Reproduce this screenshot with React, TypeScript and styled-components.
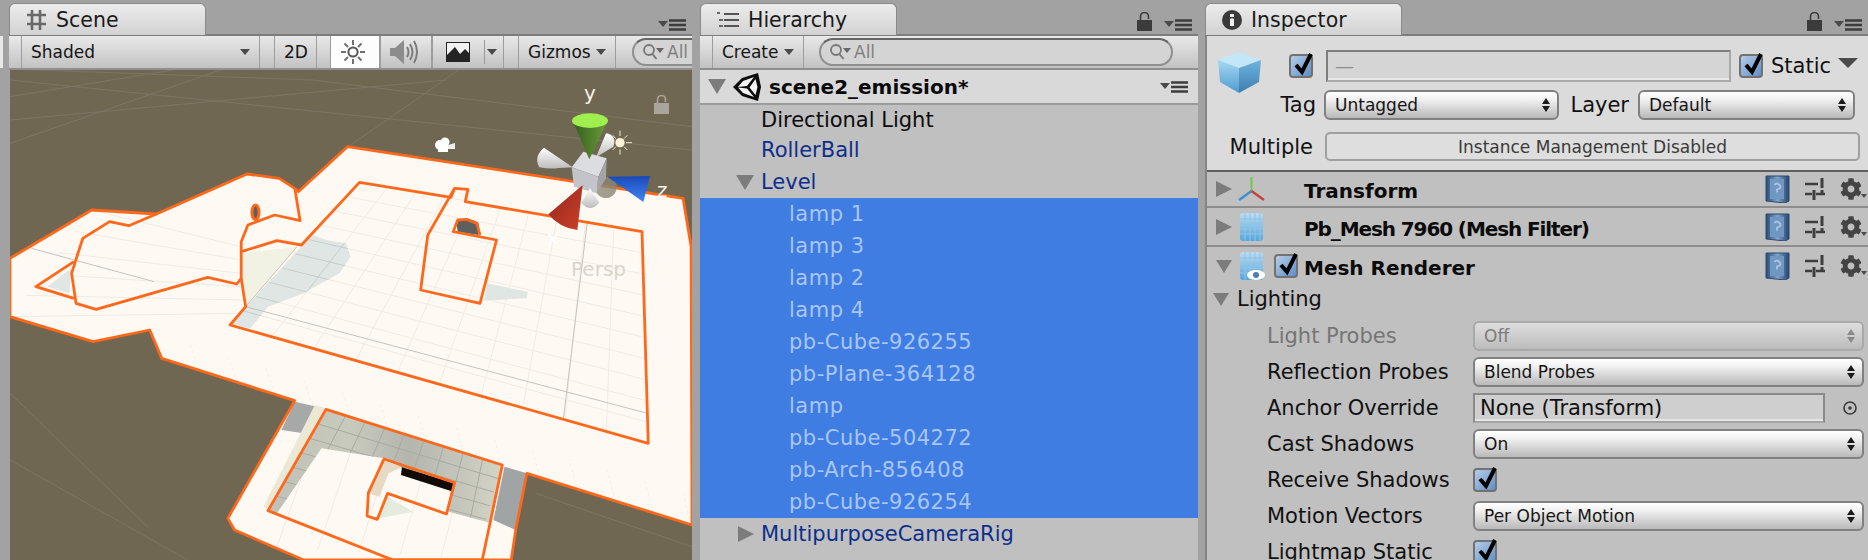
import styled, { createGlobalStyle } from 'styled-components';
import { FaCog } from 'react-icons/fa';

const GlobalStyle = createGlobalStyle`
  html, body { margin: 0; padding: 0; background: #a2a2a2; }
  * { box-sizing: border-box; }
`;

const Root = styled.div`
  width: 1868px;
  height: 560px;
  display: flex;
  overflow: hidden;
  background: #a2a2a2;
  font-family: "DejaVu Sans", sans-serif;
  color: #111;
`;

const Gutter = styled.div`
  width: 9px;
  padding-top: 36px;
  display: flex;
  flex-direction: column;
`;

const GutterBar = styled.div`
  width: 3px;
  height: 32px;
  background: #e8e8e8;
`;

const Panel = styled.section<{ $width: number; $gap?: number }>`
  width: ${p => p.$width}px;
  margin-left: ${p => p.$gap || 0}px;
  height: 100%;
  display: flex;
  flex-direction: column;
  flex-shrink: 0;
`;

const TabStrip = styled.div`
  height: 36px;
  padding-top: 3px;
  display: flex;
  align-items: stretch;
  justify-content: space-between;
  border-bottom: 2px solid #7d7d7d;
  flex-shrink: 0;
`;

const Tab = styled.div`
  width: 197px;
  height: 32px;
  padding-left: 16px;
  display: flex;
  align-items: center;
  gap: 9px;
  border: 1px solid #8a8a8a;
  border-bottom: none;
  border-radius: 6px 6px 0 0;
  background: linear-gradient(#ececec, #d2d2d2);
  font-size: 20.5px;
  color: #1a1a1a;
`;

const TabActions = styled.div`
  display: flex;
  align-items: flex-end;
  gap: 12px;
  padding: 0 6px 3px 0;
`;

const Toolbar = styled.div`
  height: 34px;
  display: flex;
  align-items: stretch;
  padding-left: 12px;
  background: linear-gradient(#e9e9e9, #c2c2c2);
  border-bottom: 2px solid #8f8f8f;
  flex-shrink: 0;
  overflow: hidden;
`;

const ToolButton = styled.div<{ $width: number; $gap?: number; $active?: boolean; $tight?: boolean }>`
  width: ${p => p.$width}px;
  margin-left: ${p => p.$gap || 0}px;
  padding: ${p => (p.$tight ? '0 6px 0 13px' : '0 9px')};
  display: flex;
  align-items: center;
  justify-content: space-between;
  flex-shrink: 0;
  font-size: 17px;
  color: #151515;
  background: ${p => (p.$active ? '#fdfdfd' : 'transparent')};
  border-left: 1px solid #9d9d9d;
  border-right: 1px solid #9d9d9d;
`;

const ToolDivider = styled.span`
  width: 1px;
  height: 24px;
  margin-left: 12px;
  background: #9a9a9a;
`;

const SearchField = styled.div<{ $width: number; $gap: number }>`
  width: ${p => p.$width}px;
  height: 28px;
  margin: 2px 0 0 ${p => p.$gap}px;
  padding-left: 8px;
  display: flex;
  align-items: center;
  gap: 1px;
  flex-shrink: 0;
  border: 2px solid #8e8e8e;
  border-top-color: #666;
  border-radius: 14px;
  background: #d4d4d4;
  font-size: 17px;
  color: #808080;
`;

const SceneView = styled.div`
  position: relative;
  margin-left: 1px;
  flex: 1;
  background: #706753;
  overflow: hidden;

  > svg.floor {
    display: block;
    width: 100%;
    height: 100%;
  }
`;

const OverlayText = styled.span<{ $left: number; $top: number; $color: string }>`
  position: absolute;
  left: ${p => p.$left}px;
  top: ${p => p.$top}px;
  font-size: 20px;
  line-height: 24px;
  color: ${p => p.$color};
`;

const OverlayIcon = styled.div<{ $left: number; $top: number }>`
  position: absolute;
  left: ${p => p.$left}px;
  top: ${p => p.$top}px;
  display: flex;
`;

const HierarchyBody = styled.div`
  flex: 1;
  background: #c0c0c0;
`;

const SceneRow = styled.div`
  height: 35px;
  padding: 0 10px 0 8px;
  display: flex;
  align-items: center;
  background: #d9d9d9;
  border-bottom: 2px solid #9b9b9b;
  font-size: 20px;
  font-weight: 700;
  color: #0a0a0a;
`;

const SceneName = styled.span`
  margin-left: 8px;
  flex: 1;
`;

const TreeRow = styled.div<{ $indent: number; $selected?: boolean; $tone?: 'plain' | 'prefab'; $height?: number }>`
  height: ${p => p.$height || 32}px;
  padding-left: ${p => p.$indent}px;
  display: flex;
  align-items: center;
  font-size: 21px;
  letter-spacing: ${p => (p.$selected ? '0.5px' : '0')};
  background: ${p => (p.$selected ? '#3f7de2' : 'transparent')};
  color: ${p => (p.$selected ? '#a9c6f6' : p.$tone === 'prefab' ? '#0e2f8c' : '#0c0c0c')};
`;

const Arrow = styled.i<{ $open?: boolean; $size: number; $margin?: number; $color?: string }>`
  width: 0;
  height: 0;
  flex-shrink: 0;
  margin-right: ${p => p.$margin || 0}px;
  border-style: solid;
  border-color: transparent;
  ${p =>
    p.$open
      ? `border-width: ${p.$size * 1.7}px ${p.$size}px 0; border-top-color: ${p.$color || '#7c7c7c'};`
      : `border-width: ${p.$size}px 0 ${p.$size}px ${p.$size * 2}px; border-left-color: ${p.$color || '#7c7c7c'};`}
`;

const StaticArrow = styled(Arrow)`
  margin-left: auto;
  margin-top: -6px;
  border-width: 10px 10px 0;
`;

const InspectorBody = styled.div`
  flex: 1;
  background: #c0c0c0;
  border-left: 2px solid #848484;
  overflow: hidden;
`;

const InspectorHead = styled.div`
  height: 136px;
  padding-top: 14px;
  background: #dbdbdb;
  border-bottom: 2px solid #5f5f5f;
  display: flex;
  flex-direction: column;
`;

const HeadRow = styled.div<{ $top?: number; $height: number }>`
  height: ${p => p.$height}px;
  margin-top: ${p => p.$top || 0}px;
  display: flex;
  align-items: center;
  font-size: 21px;
`;

const CubeSlot = styled.div`
  width: 43px;
  height: 32px;
  margin: 0 28px 0 11px;
  padding-top: 2px;
  overflow: visible;
  flex-shrink: 0;
`;

const NameInput = styled.div`
  width: 405px;
  height: 32px;
  margin: 0 8px 0 13px;
  padding-left: 7px;
  display: flex;
  align-items: center;
  background: #d5d5d5;
  border: 2px solid #7f7f7f;
  border-bottom-color: #a9a9a9;
  border-right-color: #a9a9a9;
  box-shadow: inset 0 -2px 0 #e9e9e9;
  color: #8d8d8d;
  font-size: 19px;
`;

const StaticLabel = styled.span`
  margin-left: 8px;
`;

const HeadLabel = styled.span<{ $width: number; $gap?: number }>`
  width: ${p => p.$width}px;
  margin-left: ${p => p.$gap || 0}px;
  flex-shrink: 0;
  text-align: right;
`;

const Select = styled.div<{ $width?: number; $gap?: number; $disabled?: boolean }>`
  width: ${p => (p.$width ? `${p.$width}px` : '100%')};
  height: 30px;
  margin-left: ${p => p.$gap || 0}px;
  padding: 0 7px 0 9px;
  display: flex;
  align-items: center;
  justify-content: space-between;
  flex-shrink: 0;
  font-size: 17px;
  border: 2px solid ${p => (p.$disabled ? '#a9a9a9' : '#808080')};
  border-radius: 6px;
  background: ${p => (p.$disabled ? 'linear-gradient(#dedede, #bcbcbc)' : 'linear-gradient(#ffffff, #f0f0f0 30%, #b9b9b9)')};
  color: ${p => (p.$disabled ? '#7b7b7b' : '#151515')};
`;

const Stepper = styled.span<{ $muted?: boolean }>`
  display: flex;
  flex-direction: column;
  gap: 2px;

  &::before, &::after {
    content: '';
    width: 0;
    height: 0;
    border-left: 4px solid transparent;
    border-right: 4px solid transparent;
  }
  &::before { border-bottom: 6px solid ${p => (p.$muted ? '#8a8a8a' : '#1a1a1a')}; }
  &::after { border-top: 6px solid ${p => (p.$muted ? '#8a8a8a' : '#1a1a1a')}; }
`;

const WideButton = styled.div`
  width: 535px;
  height: 29px;
  margin-left: 12px;
  display: flex;
  align-items: center;
  justify-content: center;
  border: 2px solid #a0a0a0;
  border-radius: 5px;
  background: #dedede;
  font-size: 17px;
  color: #3a3a3a;
`;

const ComponentRow = styled.div<{ $height: number; $border?: boolean }>`
  height: ${p => p.$height}px;
  padding: 0 1px 0 9px;
  display: flex;
  align-items: center;
  border-bottom: ${p => (p.$border ? '2px solid #8d8d8d' : 'none')};
`;

const IconSlot = styled.div`
  width: 27px;
  margin-left: 6px;
  display: flex;
  justify-content: center;
  flex-shrink: 0;
`;

const CheckSlot = styled.div`
  width: 39px;
  padding-left: 9px;
  flex-shrink: 0;
  display: flex;
`;

const ComponentTitle = styled.span<{ $tracking?: number }>`
  flex: 1;
  margin-top: 4px;
  font-size: 20px;
  font-weight: 700;
  letter-spacing: ${p => p.$tracking || 0}px;
  color: #0b0b0b;
`;

const ComponentTools = styled.div`
  display: flex;
  align-items: center;
  gap: 15px;
`;

const SectionRow = styled.div`
  height: 33px;
  padding: 0 0 5px 6px;
  display: flex;
  align-items: center;
  font-size: 21px;
`;

const PropRow = styled.div<{ $muted?: boolean }>`
  height: 36px;
  padding: 0 4px 0 60px;
  display: grid;
  grid-template-columns: 206px 1fr;
  align-items: center;
  font-size: 21px;
  color: ${p => (p.$muted ? '#757575' : '#111')};
`;

const ObjectField = styled.div`
  display: flex;
  align-items: center;
  justify-content: space-between;
  padding-right: 6px;
`;

const ObjectValue = styled.div`
  width: 352px;
  height: 30px;
  padding-left: 5px;
  display: flex;
  align-items: center;
  background: #cfcfcf;
  border: 2px solid #8a8a8a;
  border-bottom-color: #a4a4a4;
  box-shadow: inset 0 -2px 0 #e4e4e4;
  font-size: 21px;
`;

const CheckBox = styled.div<{ $gap?: number; $size?: number }>`
  width: ${p => p.$size || 24}px;
  height: ${p => p.$size || 24}px;
  margin-left: ${p => p.$gap || 0}px;
  position: relative;
  flex-shrink: 0;
  border: 2px solid #727272;
  border-radius: 4px;
  background: linear-gradient(135deg, #b6cde8, #5f8fc4);

  > svg {
    position: absolute;
    left: 2px;
    top: -5px;
  }
`;

const SmallCaret = styled.i`
  width: 0;
  height: 0;
  flex-shrink: 0;
  border-left: 5px solid transparent;
  border-right: 5px solid transparent;
  border-top: 6px solid #4a4a4a;
`;

const Mark = () => (
  <svg width="22" height="26" viewBox="0 0 22 26">
    <path d="M3 14 L9 21 L18 3" fill="none" stroke="#000" strokeWidth="4" />
  </svg>
);

const Check = ({ gap, size }: { gap?: number; size?: number }) => (
  <CheckBox $gap={gap} $size={size}>
    <Mark />
  </CheckBox>
);

const MenuIcon = () => (
  <svg width="28" height="12" viewBox="0 0 28 12">
    <path d="M0 2h10l-5 6z" fill="#4a4a4a" />
    <path d="M11 1.500h17M11 6h17M11 10.500h17" stroke="#3d3d3d" strokeWidth="2.400" />
  </svg>
);

const LockIcon = ({ color = '#3b3b3b' }: { color?: string }) => (
  <svg width="15" height="19" viewBox="0 0 15 19">
    <rect x="0" y="8" width="15" height="11" fill={color} />
    <path d="M3.500 8V4.500a4 4 0 0 1 8 0V7" fill="none" stroke={color} strokeWidth="1.600" />
  </svg>
);

const GridTabIcon = () => (
  <svg width="21" height="22" viewBox="0 0 21 22">
    <path d="M6 1v20M14 1v20M1 6h19M1 15h19" stroke="#555" strokeWidth="2.600" opacity=".85" />
  </svg>
);

const ListTabIcon = () => (
  <svg width="22" height="16" viewBox="0 0 22 16">
    <path d="M0 1h3M2 8h4M2 14h4" stroke="#666" strokeWidth="2" />
    <path d="M7 2h15M7 8h15M7 14h15" stroke="#555" strokeWidth="2.200" />
  </svg>
);

const InfoIcon = () => (
  <svg width="20" height="20" viewBox="0 0 20 20">
    <circle cx="10" cy="10" r="10" fill="#3a3a3a" />
    <rect x="8" y="8.500" width="4" height="7.500" fill="#eee" />
    <rect x="8" y="4" width="4" height="3" fill="#eee" />
  </svg>
);

const SunIcon = () => (
  <svg width="26" height="26" viewBox="0 0 26 26">
    <circle cx="13" cy="13" r="4.600" fill="none" stroke="#565656" strokeWidth="2" />
    <path d="M13 1v5M13 20v5M1 13h5M20 13h5M4.500 4.500l3.500 3.500M18 18l3.500 3.500M21.500 4.500L18 8M8 18l-3.500 3.500" stroke="#707070" strokeWidth="2" />
  </svg>
);

const SpeakerIcon = () => (
  <svg width="28" height="26" viewBox="0 0 28 26">
    <path d="M0 9h5l9-8v24l-9-8H0z" fill="#8c8c8c" />
    <path d="M17 8q3 5 0 10M20 5q5 8 0 16M24 2q6 11 0 22" fill="none" stroke="#7c7c7c" strokeWidth="2" />
  </svg>
);

const ImageIcon = () => (
  <svg width="24" height="20" viewBox="0 0 24 20">
    <rect x="0" y="0" width="24" height="20" fill="#242424" />
    <path d="M1 1h22v10l-4-4-5 5-5-7-8 8z" fill="#f2f2f2" />
  </svg>
);

const SearchIcon = () => (
  <svg width="24" height="20" viewBox="0 0 24 20">
    <circle cx="7" cy="8" r="5" fill="none" stroke="#777" strokeWidth="1.800" />
    <path d="M10.500 12l4 5" stroke="#777" strokeWidth="2" />
    <path d="M14 6h8l-4 5z" fill="#666" />
  </svg>
);

const UnityLogo = () => (
  <svg width="28" height="28" viewBox="0 0 28 28">
    <path d="M0 14 L9 5 L25 0 L28 14 L25 28 L9 23z" fill="#0b0b0b" />
    <path d="M5 14 L10 8 L21 4 L14 13z" fill="#f4f4f4" />
    <path d="M5 14.500 L14 15.500 L21 24 L10 20z" fill="#f4f4f4" />
    <path d="M22.500 6 L24.500 14 L22.500 22 L16.500 14.500z" fill="#f4f4f4" />
  </svg>
);

const CubeIcon = () => (
  <svg width="43" height="41" viewBox="0 0 43 41">
    <defs>
      <linearGradient id="cubeLeft" x1="0" y1="0" x2="0" y2="1">
        <stop offset="0" stopColor="#a5d8f3" />
        <stop offset="1" stopColor="#4f9cd0" />
      </linearGradient>
      <linearGradient id="cubeRight" x1="0" y1="0" x2="0" y2="1">
        <stop offset="0" stopColor="#6fb4de" />
        <stop offset="1" stopColor="#3d7eaf" />
      </linearGradient>
    </defs>
    <path d="M21 0 L43 8 L21 16 L0 8z" fill="#c4e7f8" />
    <path d="M0 8 L21 16 L21 41 L2 30z" fill="url(#cubeLeft)" />
    <path d="M43 8 L21 16 L21 41 L41 30z" fill="url(#cubeRight)" />
  </svg>
);

const AxesIcon = () => (
  <svg width="27" height="24" viewBox="0 0 27 24">
    <path d="M13.500 14V0" stroke="#7cc24a" strokeWidth="2" />
    <path d="M13.500 14L1 23" stroke="#3f8fd0" strokeWidth="2.400" />
    <path d="M13.500 14L26 23" stroke="#c8403a" strokeWidth="2.400" />
  </svg>
);

const MeshIcon = ({ eye }: { eye?: boolean }) => (
  <svg width="26" height="28" viewBox="0 0 26 28">
    <defs>
      <linearGradient id="meshFill" x1="0" y1="0" x2="0" y2="1">
        <stop offset="0" stopColor="#bcdcf0" />
        <stop offset="1" stopColor="#55a6dd" />
      </linearGradient>
    </defs>
    <rect x="1" y="0" width="23" height="28" rx="3" fill="url(#meshFill)" />
    <path d="M6 0v28M11 0v28M16 0v28M21 0v28M1 6h23M1 11h23M1 16h23M1 21h23" stroke="#8fc3e6" strokeWidth="1" />
    {eye && (
      <g>
        <ellipse cx="17" cy="23" rx="9" ry="5" fill="#fff" />
        <circle cx="17" cy="23" r="3" fill="#4a7fb0" />
      </g>
    )}
  </svg>
);

const BookIcon = () => (
  <svg width="25" height="28" viewBox="0 0 25 28">
    <defs>
      <linearGradient id="bookFill" x1="0" y1="0" x2="1" y2="0">
        <stop offset="0" stopColor="#2a4a75" />
        <stop offset=".5" stopColor="#7ea5cc" />
        <stop offset="1" stopColor="#25436c" />
      </linearGradient>
    </defs>
    <path d="M1 1h23v25l-4 2-19-2z" fill="url(#bookFill)" stroke="#2e4a70" />
    <rect x="5" y="4" width="14" height="20" fill="#6f97c2" />
    <path d="M9.500 10q2-3 5 0t-2.500 4.500v3" fill="none" stroke="#a8c4de" strokeWidth="1.800" />
  </svg>
);

const SlidersIcon = () => (
  <svg width="20" height="22" viewBox="0 0 20 22">
    <path d="M0 6h13M0 16h7M11 16h9" stroke="#3e3e3e" strokeWidth="2.600" />
    <path d="M17 0v10" stroke="#3e3e3e" strokeWidth="3" />
    <path d="M9 12v10" stroke="#3e3e3e" strokeWidth="3" />
    <rect x="15.500" y="12" width="3" height="3" fill="#3e3e3e" />
  </svg>
);

const GearWrap = styled.div`
  display: flex;
  align-items: flex-end;
  gap: 0;
  width: 27px;

  > i {
    border-width: 4px 3px 0;
    margin-bottom: 2px;
    margin-left: -1px;
  }
`;

const GearIcon = () => (
  <GearWrap>
    <FaCog size={22} color="#444" />
    <SmallCaret />
  </GearWrap>
);

const TargetIcon = () => (
  <svg width="16" height="16" viewBox="0 0 16 16">
    <circle cx="8" cy="8" r="6" fill="none" stroke="#3a3a3a" strokeWidth="1.600" />
    <circle cx="8" cy="8" r="1.800" fill="#3a3a3a" />
  </svg>
);

const Tools = () => (
  <ComponentTools>
    <BookIcon />
    <SlidersIcon />
    <GearIcon />
  </ComponentTools>
);

// floor drawing, coordinates are in the scene's own 1528x1470 space
const ORANGE = '#ff681a';

const outer =
  '22,595 205,450 350,462 553,342 625,355 660,385 668,395 778,260 1530,415 1548,560 1550,1395 1180,1240 1155,1410 1145,1500 680,1500 525,1410 510,1375 660,1022 362,895 335,810 208,845 22,770';
const innerA =
  '805,367 1010,412 1018,385 1048,388 1042,425 1438,515 1452,1150 515,795 550,740 540,655 540,575 620,542 675,555';
const wing = '540,655 530,672 465,652 215,748 170,730 160,640 185,535 245,485 288,497 350,462';
const wingTip = '165,605 80,680 165,715';
const arch = '540,575 540,545 555,495 615,465 672,482 660,385';
const pillar = '1018,385 958,525 942,690 1075,730 1112,540 1015,515 1025,480 1045,478 1068,490 1075,525';
const pit = '730,1048 1125,1215 1080,1500 880,1500 600,1352';
const hook = '860,1197 1018,1268 1000,1362 868,1300 845,1378 822,1368 825,1298';
const floorShadow = '810,395 700,525 515,795 560,805 600,740 680,700 760,640 785,590 775,550 730,540 700,525';
const pitShadow = '730,1048 1125,1215 1100,1390 1005,1355 1020,1270 900,1225 860,1195 720,1165 620,1360 600,1352';

const lerp = (a: number[], b: number[], t: number) => [a[0] + (b[0] - a[0]) * t, a[1] + (b[1] - a[1]) * t];

const gridLines = (a: number[], b: number[], c: number[], d: number[], n: number) =>
  Array.from({ length: n + 1 }, (_, i) => {
    const p = lerp(a, b, i / n);
    const q = lerp(c, d, i / n);
    return `M${p[0]} ${p[1]}L${q[0]} ${q[1]}`;
  }).join('');

const floorGrid =
  gridLines([805, 367], [515, 795], [1438, 515], [1452, 1150], 10) +
  gridLines([805, 367], [1438, 515], [515, 795], [1452, 1150], 10) +
  gridLines([205, 450], [22, 770], [540, 560], [540, 760], 5) +
  gridLines([620, 1460], [1080, 1500], [730, 1048], [1125, 1215], 5);

const shadowGrid =
  gridLines([805, 367], [515, 795], [1438, 515], [1452, 1150], 10) +
  gridLines([805, 367], [1438, 515], [515, 795], [1452, 1150], 10);

const pitGrid =
  gridLines([730, 1048], [1125, 1215], [600, 1352], [1085, 1540], 9) +
  gridLines([730, 1048], [600, 1352], [1125, 1215], [1060, 1500], 7);

const wallGrid = gridLines([362, 895], [1548, 1395], [340, 820], [1530, 1300], 14);

const groundGrid =
  'M22 27L700 60L1550 200M22 180L1000 60M400 27L22 110M22 250L500 27M1030 27L780 260M22 60L1550 270M22 1000L330 1400M22 1200L420 1500M1200 1300L1550 1460';

const FloorDrawing = () => (
  <svg className="floor" viewBox="22 30 1528 1470" preserveAspectRatio="none">
    <defs>
      <clipPath id="floorShadowClip">
        <polygon points={floorShadow} />
      </clipPath>
      <clipPath id="pitShadowClip">
        <polygon points={pitShadow} />
      </clipPath>
      <linearGradient id="pitShade" x1="0" y1="0" x2="1" y2="0">
        <stop offset="0" stopColor="#bfc1b6" />
        <stop offset=".35" stopColor="#c9cabe" />
        <stop offset=".6" stopColor="#b4b6ae" />
        <stop offset="1" stopColor="#d3d3c6" />
      </linearGradient>
    </defs>
    <path d={groundGrid} fill="none" stroke="#7d7563" strokeWidth="1" vectorEffect="non-scaling-stroke" />
    <polygon points={outer} fill="#fff9f3" />
    <path d={floorGrid} fill="none" stroke="#f0ebe5" strokeWidth="1" vectorEffect="non-scaling-stroke" />
    <path d={wallGrid} fill="none" stroke="#f8f2de" strokeWidth="1" strokeDasharray="3 3" vectorEffect="non-scaling-stroke" />
    <polygon points={floorShadow} fill="#dfe6e3" />
    <path d={shadowGrid} clipPath="url(#floorShadowClip)" fill="none" stroke="#c5cfcc" strokeWidth="1" vectorEffect="non-scaling-stroke" />
    <polygon points="540,580 665,560 550,740 540,660" fill="#f1f2e4" />
    <polygon points="1090,670 1182,695 1180,715 1085,722" fill="#dfe6e3" />
    <polygon points="160,625 105,680 155,700" fill="#dfe6e3" />
    <polygon points="660,1025 710,1040 680,1120 630,1110" fill="#a6a9a8" />
    <polygon points="1130,1220 1180,1240 1155,1410 1105,1380" fill="#a0a4a4" />
    <polygon points="705,1035 730,1045 610,1360 590,1340" fill="#ebe8d6" />
    <polygon points={pitShadow} fill="url(#pitShade)" />
    <path d={pitGrid} clipPath="url(#pitShadowClip)" fill="none" stroke="#a9aba1" strokeWidth="1" vectorEffect="non-scaling-stroke" />
    <polygon points="855,1197 900,1222 870,1240 850,1310 825,1300" fill="#e6d9c6" />
    <polygon points="900,1222 1018,1270 1015,1295 898,1245" fill="#120a06" />
    <polygon points="868,1310 925,1355 850,1375" fill="#e6ebe0" />
    <path d="M1025 515L1022 485Q1045 465 1072 490L1072 525z" fill="#5f5f5f" />
    <ellipse cx="572" cy="457" rx="8" ry="22" fill="#5f5f5f" stroke={ORANGE} strokeWidth="3" vectorEffect="non-scaling-stroke" />
    <path d="M70 565L345 665M550 740L1450 1060M1315 490L1262 1075M665 560L550 740" fill="none" stroke="#c6c3be" strokeWidth="1" vectorEffect="non-scaling-stroke" />
    <g fill="none" stroke={ORANGE} strokeWidth="2.800" strokeLinejoin="round">
      <polygon points={outer} vectorEffect="non-scaling-stroke" />
      <polygon points={innerA} vectorEffect="non-scaling-stroke" />
      <polyline points={wing} vectorEffect="non-scaling-stroke" />
      <polyline points={wingTip} vectorEffect="non-scaling-stroke" />
      <polyline points={arch} vectorEffect="non-scaling-stroke" />
      <polyline points={pillar} vectorEffect="non-scaling-stroke" />
      <polygon points={pit} vectorEffect="non-scaling-stroke" />
      <polygon points={hook} vectorEffect="non-scaling-stroke" />
    </g>
  </svg>
);

const Gizmo = () => (
  <svg width="200" height="170" viewBox="0 0 600 510">
    <defs>
      <linearGradient id="gGreen" x1="0" x2="1" y1="0" y2="0">
        <stop offset="0" stopColor="#355f1c" />
        <stop offset="1" stopColor="#6b9c3a" />
      </linearGradient>
      <linearGradient id="gBlue" x1="0" x2="0" y1="0" y2="1">
        <stop offset="0" stopColor="#1b49b8" />
        <stop offset="1" stopColor="#3f86f5" />
      </linearGradient>
      <linearGradient id="gRed" x1="0" x2="1" y1="0" y2="1">
        <stop offset="0" stopColor="#8f2a1c" />
        <stop offset="1" stopColor="#cf3d2a" />
      </linearGradient>
      <linearGradient id="gWhite" x1="0" x2="0" y1="0" y2="1">
        <stop offset="0" stopColor="#ffffff" />
        <stop offset="1" stopColor="#bdbdbd" />
      </linearGradient>
    </defs>
    <circle cx="318" cy="322" r="32" fill="#8a8774" opacity=".8" />
    <path d="M288 232 L318 160 Q352 165 340 200z" fill="url(#gWhite)" />
    <g stroke="#efe7cf" strokeWidth="3">
      <path d="M360 152v16M360 208v16M326 188h16M378 188h18M338 166l10 10M372 200l10 10M382 166l-10 10M348 200l-10 10" />
    </g>
    <circle cx="360" cy="188" r="14" fill="#fbf1d6" />
    <path d="M218 262 L132 203 Q100 230 118 262 Q150 268 175 264z" fill="url(#gWhite)" />
    <path d="M215 262 L250 215 L320 235 L295 290z" fill="#dcdde1" />
    <path d="M215 262 L295 290 L290 340 L222 320z" fill="#c2c4c9" />
    <path d="M295 290 L320 235 L318 295 L290 340z" fill="#a4a4a6" />
    <path d="M270 325 L298 368 Q270 400 244 368z" fill="url(#gWhite)" />
    <path d="M268 238 L218 122 Q270 155 323 122z" fill="url(#gGreen)" />
    <ellipse cx="270" cy="122" rx="54" ry="22" fill="#9ff04f" />
    <path d="M322 290 L450 288 L430 366z" fill="url(#gBlue)" />
    <path d="M248 315 L145 403 Q180 445 232 450z" fill="url(#gRed)" />
  </svg>
);

const CameraIcon = () => (
  <svg width="20" height="15" viewBox="0 0 20 15">
    <circle cx="5" cy="8" r="5" fill="#fff" />
    <circle cx="10" cy="5" r="4.500" fill="#fff" />
    <rect x="3" y="8" width="10" height="7" fill="#fff" />
    <path d="M13 8l7-2v6l-7 0z" fill="#eee" />
  </svg>
);

const SELECTED = [
  'lamp 1',
  'lamp 3',
  'lamp 2',
  'lamp 4',
  'pb-Cube-926255',
  'pb-Plane-364128',
  'lamp',
  'pb-Cube-504272',
  'pb-Arch-856408',
  'pb-Cube-926254',
];

const PROPS: { label: string; value: string; muted?: boolean }[] = [
  { label: 'Light Probes', value: 'Off', muted: true },
  { label: 'Reflection Probes', value: 'Blend Probes' },
];

const App = () => {
  return (
    <>
      <GlobalStyle />
      <Root>
        <Gutter>
          <GutterBar />
        </Gutter>

        <Panel $width={683}>
          <TabStrip>
            <Tab>
              <GridTabIcon />
              Scene
            </Tab>
            <TabActions>
              <MenuIcon />
            </TabActions>
          </TabStrip>
          <Toolbar>
            <ToolButton $width={239}>
              Shaded
              <SmallCaret />
            </ToolButton>
            <ToolButton $width={43} $gap={14}>2D</ToolButton>
            <ToolButton $width={50} $gap={13} $active>
              <SunIcon />
            </ToolButton>
            <ToolButton $width={52}>
              <SpeakerIcon />
            </ToolButton>
            <ToolButton $width={72} $tight>
              <ImageIcon />
              <ToolDivider />
              <SmallCaret />
            </ToolButton>
            <ToolButton $width={98} $gap={14}>
              Gizmos
              <SmallCaret />
            </ToolButton>
            <SearchField $width={120} $gap={16}>
              <SearchIcon />
              All
            </SearchField>
          </Toolbar>
          <SceneView>
            <FloorDrawing />
            <OverlayIcon $left={490} $top={10}>
              <Gizmo />
            </OverlayIcon>
            <OverlayText $left={574} $top={11} $color="#f5f2ea">y</OverlayText>
            <OverlayText $left={647} $top={108} $color="#f8f4ee">z</OverlayText>
            <OverlayText $left={537} $top={156} $color="#ffffff">x</OverlayText>
            <OverlayText $left={561} $top={187} $color="#d9d5cd">Persp</OverlayText>
            <OverlayIcon $left={644} $top={25}>
              <LockIcon color="#a9a59c" />
            </OverlayIcon>
            <OverlayIcon $left={425} $top={67}>
              <CameraIcon />
            </OverlayIcon>
          </SceneView>
        </Panel>

        <Panel $width={498} $gap={8}>
          <TabStrip>
            <Tab>
              <ListTabIcon />
              Hierarchy
            </Tab>
            <TabActions>
              <LockIcon />
              <MenuIcon />
            </TabActions>
          </TabStrip>
          <Toolbar>
            <ToolButton $width={92} $gap={0}>
              Create
              <SmallCaret />
            </ToolButton>
            <SearchField $width={354} $gap={15}>
              <SearchIcon />
              All
            </SearchField>
          </Toolbar>
          <HierarchyBody>
            <SceneRow>
              <Arrow $open $size={9} $margin={7} />
              <UnityLogo />
              <SceneName>scene2_emission*</SceneName>
              <MenuIcon />
            </SceneRow>
            <TreeRow $indent={61} $height={29}>Directional Light</TreeRow>
            <TreeRow $indent={61} $tone="prefab">RollerBall</TreeRow>
            <TreeRow $indent={36} $tone="prefab">
              <Arrow $open $size={9} $margin={7} />
              Level
            </TreeRow>
            {SELECTED.map(name => (
              <TreeRow key={name} $indent={89} $selected>
                {name}
              </TreeRow>
            ))}
            <TreeRow $indent={38} $tone="prefab">
              <Arrow $size={8} $margin={7} />
              MultipurposeCameraRig
            </TreeRow>
          </HierarchyBody>
        </Panel>

        <Panel $width={663} $gap={7}>
          <TabStrip>
            <Tab>
              <InfoIcon />
              Inspector
            </Tab>
            <TabActions>
              <LockIcon />
              <MenuIcon />
            </TabActions>
          </TabStrip>
          <InspectorBody>
            <InspectorHead>
              <HeadRow $height={32}>
                <CubeSlot>
                  <CubeIcon />
                </CubeSlot>
                <Check />
                <NameInput>—</NameInput>
                <Check />
                <StaticLabel>Static</StaticLabel>
                <StaticArrow $open $size={10} $margin={10} $color="#4a4a4a" />
              </HeadRow>
              <HeadRow $top={8} $height={30}>
                <HeadLabel $width={109}>Tag</HeadLabel>
                <Select $width={235} $gap={8}>
                  Untagged
                  <Stepper />
                </Select>
                <HeadLabel $width={70}>Layer</HeadLabel>
                <Select $width={217} $gap={9}>
                  Default
                  <Stepper />
                </Select>
              </HeadRow>
              <HeadRow $top={12} $height={29}>
                <HeadLabel $width={106}>Multiple</HeadLabel>
                <WideButton>Instance Management Disabled</WideButton>
              </HeadRow>
            </InspectorHead>

            <ComponentRow $height={36} $border>
              <Arrow $size={8} />
              <IconSlot>
                <AxesIcon />
              </IconSlot>
              <CheckSlot />
              <ComponentTitle>Transform</ComponentTitle>
              <Tools />
            </ComponentRow>
            <ComponentRow $height={39} $border>
              <Arrow $size={8} />
              <IconSlot>
                <MeshIcon />
              </IconSlot>
              <CheckSlot />
              <ComponentTitle $tracking={-1.1}>Pb_Mesh 7960 (Mesh Filter)</ComponentTitle>
              <Tools />
            </ComponentRow>
            <ComponentRow $height={38}>
              <Arrow $open $size={8} />
              <IconSlot>
                <MeshIcon eye />
              </IconSlot>
              <CheckSlot>
                <Check />
              </CheckSlot>
              <ComponentTitle>Mesh Renderer</ComponentTitle>
              <Tools />
            </ComponentRow>
            <SectionRow>
              <Arrow $open $size={8} $margin={8} />
              Lighting
            </SectionRow>

            {PROPS.map(prop => (
              <PropRow key={prop.label} $muted={prop.muted}>
                {prop.label}
                <Select $disabled={prop.muted}>
                  {prop.value}
                  <Stepper $muted={prop.muted} />
                </Select>
              </PropRow>
            ))}
            <PropRow>
              Anchor Override
              <ObjectField>
                <ObjectValue>None (Transform)</ObjectValue>
                <TargetIcon />
              </ObjectField>
            </PropRow>
            <PropRow>
              Cast Shadows
              <Select>
                On
                <Stepper />
              </Select>
            </PropRow>
            <PropRow>
              Receive Shadows
              <Check />
            </PropRow>
            <PropRow>
              Motion Vectors
              <Select>
                Per Object Motion
                <Stepper />
              </Select>
            </PropRow>
            <PropRow>
              Lightmap Static
              <Check />
            </PropRow>
          </InspectorBody>
        </Panel>
      </Root>
    </>
  );
};

export default App;
